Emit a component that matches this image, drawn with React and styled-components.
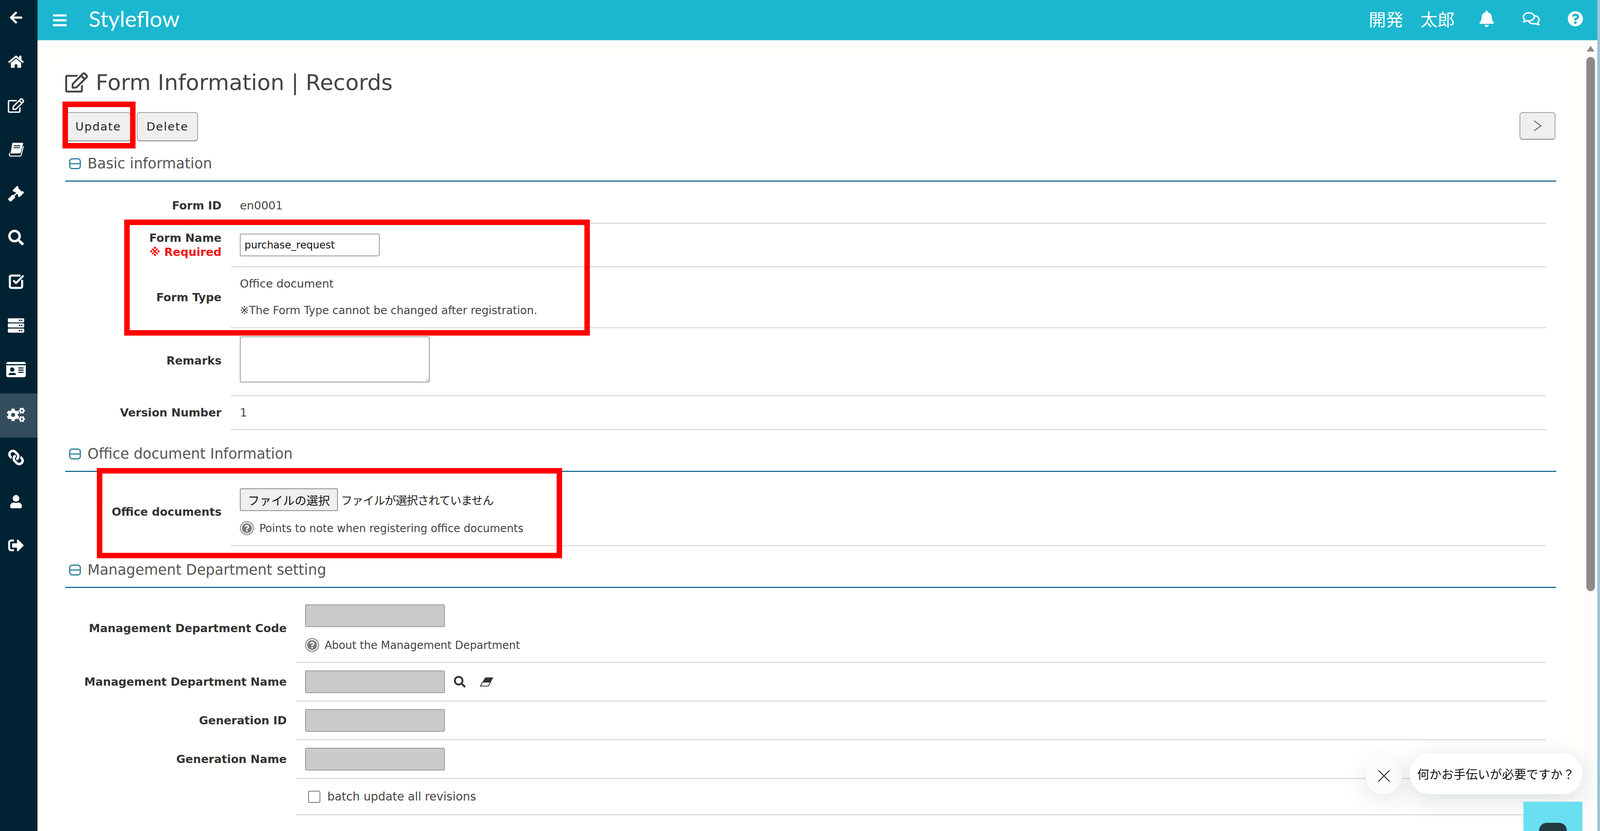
import React from "react";
import styled, { createGlobalStyle } from "styled-components";
import { SquareCheckBig } from "lucide-react";
import {
  FaArrowLeft,
  FaBars,
  FaBell,
  FaCogs,
  FaGavel,
  FaHome,
  FaIdCard,
  FaLink,
  FaQuestionCircle,
  FaRegComments,
  FaRegEdit,
  FaSearch,
  FaServer,
  FaSignOutAlt,
  FaUser,
} from "react-icons/fa";

const GlobalStyle = createGlobalStyle`
  html, body {
    margin: 0;
    padding: 0;
    overflow: hidden;
  }
  * {
    box-sizing: border-box;
  }
`;

const Shell = styled.div`
  position: relative;
  display: flex;
  width: 100vw;
  height: 100vh;
  overflow: hidden;
  background-color: #9fc3da;
  font-family: "DejaVu Sans", "Noto Sans CJK JP", sans-serif;
  color: #444;
`;

const Sidebar = styled.nav`
  width: 96px;
  flex-shrink: 0;
  background-color: #002233;
  display: flex;
  flex-direction: column;
`;

const NavList = styled.div`
  display: flex;
  flex-direction: column;
  margin-top: -6px;
`;

const NavItem = styled.a`
  height: 112.6px;
  display: flex;
  align-items: center;
  justify-content: center;
  padding-right: 14px;
  padding-bottom: ${({ $active }) => ($active ? "4px" : "10px")};
  color: #fff;
  background-color: ${({ $active }) => ($active ? "#334d5c" : "transparent")};
`;

const FlippedLink = styled(FaLink)`
  transform: scaleX(-1);
`;

const Main = styled.div`
  flex: 1;
  min-width: 0;
  margin-right: 7px;
  display: flex;
  flex-direction: column;
`;

const Header = styled.header`
  height: 103px;
  flex-shrink: 0;
  display: flex;
  align-items: center;
  padding: 0 36px 0 37px;
  background-color: #1bb7cf;
  color: #fff;
`;

const Logo = styled.div`
  margin-left: 54px;
  margin-top: -8px;
  font-family: "Lato", sans-serif;
  font-size: 57px;
  line-height: 1;
`;

const UserName = styled.div`
  margin-left: auto;
  margin-top: -8px;
  font-family: "Noto Sans CJK JP", sans-serif;
  font-size: 44px;
  line-height: 1;
`;

const HeaderIcons = styled.div`
  display: flex;
  align-items: center;
  gap: 71px;
  margin-left: 61px;
  margin-top: -8px;
`;

const Body = styled.div`
  flex: 1;
  display: flex;
  min-height: 0;
`;

const Page = styled.main`
  flex: 1;
  min-width: 0;
  padding: 45px 49px 0 47px;
  background-color: #fffffb;
`;

const Sheet = styled.div`
  height: 100%;
  padding: 0 21px 0 24px;
  background-color: #fff;
`;

const ScrollRail = styled.div`
  width: 35px;
  display: flex;
  flex-direction: column;
  align-items: center;
  padding-top: 14px;
  background-color: #fcfcfc;
`;

const ScrollArrow = styled.div`
  width: 0;
  height: 0;
  border-left: 10px solid transparent;
  border-right: 10px solid transparent;
  border-bottom: 15px solid #8a8a8a;
`;

const ScrollThumb = styled.div`
  width: 22px;
  height: 1367px;
  margin-top: 14px;
  border-radius: 11px;
  background-color: #8a8a8a;
`;

const Title = styled.h1`
  height: 126px;
  margin: 0;
  display: flex;
  align-items: center;
  gap: 20px;
  font-size: 56px;
  font-weight: 400;
  line-height: 1;
  color: #444;
`;

const Toolbar = styled.div`
  display: flex;
  align-items: flex-start;
  gap: 15px;
  margin: 13px 2px -4px 1px;
`;

const Button = styled.button`
  height: 75px;
  padding: 0 23px;
  border: 2px solid #a0a0a0;
  border-bottom-width: 3px;
  border-radius: 8px;
  background-color: #efefef;
  font-family: inherit;
  font-size: 29px;
  letter-spacing: 2px;
  color: #222;
`;

const PagerButton = styled(Button)`
  width: 92px;
  height: 71px;
  margin-left: auto;
  padding: 0;
  display: flex;
  align-items: center;
  justify-content: center;
  color: #666;
`;

const Section = styled.section`
  margin-top: 18px;
`;

const SectionHead = styled.h2`
  height: 89px;
  margin: 0;
  padding-left: 10px;
  display: flex;
  align-items: center;
  gap: 17px;
  border-bottom: 3px solid #1d6d91;
  font-size: 36.5px;
  font-weight: 400;
  line-height: 1;
  color: #555;

  svg {
    color: #2a7fa0;
  }
`;

const Row = styled.div`
  display: grid;
  grid-template-columns: ${({ $label }) => $label || 400}px 1fr;
  height: ${({ $h }) => $h}px;
  color: #444;
`;

const Label = styled.div`
  display: flex;
  flex-direction: column;
  align-items: flex-end;
  justify-content: center;
  padding-top: ${({ $top }) => $top || 0}px;
  padding-bottom: ${({ $bottom }) => $bottom || 0}px;
  border-bottom: 3px solid transparent;
  font-size: 28.7px;
  font-weight: 700;
  line-height: 36px;
  color: #333;
`;

const Required = styled.span`
  color: #f01414;
`;

const Value = styled.div`
  margin: 0 26px 0 24px;
  padding-left: 23px;
  padding-top: ${({ $top }) => $top || 0}px;
  padding-bottom: ${({ $bottom }) => $bottom || 0}px;
  display: flex;
  flex-direction: column;
  align-items: flex-start;
  justify-content: center;
  gap: ${({ $gap }) => $gap || 0}px;
  border-bottom: 3px solid #dddddd;
  font-size: 29px;
  line-height: 34px;
`;

const Note = styled.div`
  font-size: 28px;
  line-height: 34px;
  color: #444;
`;

const TextInput = styled.input`
  width: 358px;
  height: 58px;
  padding: 0 10px;
  border: 2px solid #999;
  border-radius: 4px;
  background-color: ${({ disabled }) => (disabled ? "#cacaca" : "#fff")};
  font-family: inherit;
  font-size: 26px;
  color: #111;
`;

const RemarksBox = styled.textarea`
  width: 486px;
  height: 118px;
  margin-bottom: 6px;
  border: 2px solid #999;
  border-radius: 4px;
  background-color: #fff;
`;

const FileRow = styled.div`
  display: flex;
  align-items: center;
  gap: 8px;
  font-family: "Noto Sans CJK JP", sans-serif;
  font-size: 29px;
  letter-spacing: -1px;
  color: #222;
`;

const FileButton = styled.button`
  width: 251px;
  height: 58px;
  padding: 0;
  border: 2px solid #8a8a8a;
  border-radius: 4px;
  background-color: #efefef;
  font-family: inherit;
  font-size: 30px;
  color: #111;
`;

const HelpLine = styled.div`
  display: flex;
  align-items: center;
  gap: 14px;
  font-size: 27.5px;
  color: #444;
`;

const HelpBadge = styled.span`
  width: 36px;
  height: 36px;
  display: flex;
  align-items: center;
  justify-content: center;
  border: 3px solid #9a9a9a;
  border-radius: 50%;
  color: #777;
`;

const InputRow = styled.div`
  display: flex;
  align-items: center;
  gap: 23px;
  color: #333;
`;

const EraserIcon = styled.svg`
  margin-left: 13px;
  color: #333;
`;

const CheckLine = styled.label`
  display: flex;
  align-items: center;
  gap: 18px;
  margin-left: 8px;
  font-size: 29.5px;
  color: #444;
`;

const CheckBox = styled.input`
  appearance: none;
  width: 31px;
  height: 31px;
  margin: 0;
  border: 2px solid #777;
  border-radius: 4px;
  background-color: #fff;
`;

const Highlight = styled.div`
  position: absolute;
  left: ${({ $x }) => $x}px;
  top: ${({ $y }) => $y}px;
  width: ${({ $w }) => $w}px;
  height: ${({ $h }) => $h}px;
  border: 14px solid #ff0000;
  pointer-events: none;
`;

const ChatPrompt = styled.div`
  position: absolute;
  right: 46px;
  bottom: 94px;
  display: flex;
  align-items: flex-end;
  gap: 20px;
`;

const ChatClose = styled.div`
  width: 93px;
  height: 95px;
  display: flex;
  align-items: center;
  justify-content: center;
  border-radius: 50%;
  background-color: #fbfbfb;
  box-shadow: 0 14px 60px rgba(20, 50, 60, 0.12);
  color: #111;
`;

const ChatBubble = styled.div`
  width: 441px;
  height: 104px;
  display: flex;
  align-items: center;
  justify-content: center;
  padding-bottom: 4px;
  border-radius: 50px;
  background-color: #fff;
  box-shadow: 0 14px 60px rgba(20, 50, 60, 0.16);
  font-family: "Noto Sans CJK JP", sans-serif;
  font-size: 31px;
  color: #111;
`;

const ChatLauncher = styled.div`
  position: absolute;
  right: 45px;
  bottom: 0;
  width: 151px;
  height: 75px;
  display: flex;
  justify-content: center;
  padding-top: 54px;
  background-color: #69e0f1;
`;

const ChatLauncherGlyph = styled.div`
  width: 71px;
  height: 21px;
  border-radius: 20px 20px 0 0;
  background-color: #243b40;
`;

const BookIcon = ({ size }) => (
  <svg width={size} height={size} viewBox="0 0 41 38" fill="none">
    <path d="M11 1H37Q40 1 39 4L33 27Q32.5 29 30 29H6Z" fill="currentColor" />
    <path d="M4 28Q1 36 8 36H31Q33 36 34 34L40 10" stroke="currentColor" strokeWidth="2.5" />
    <path d="M15 9H32M14 14H31" stroke="#002233" strokeWidth="2.5" />
  </svg>
);

const CheckIcon = ({ size }) => <SquareCheckBig size={size} strokeWidth={3} />;

const MinusBox = () => (
  <svg width="30" height="28" viewBox="0 0 30 28" fill="none">
    <rect x="1.5" y="1.5" width="27" height="25" rx="6" stroke="currentColor" strokeWidth="3" />
    <path d="M2 14H28" stroke="currentColor" strokeWidth="3" />
  </svg>
);

const navItems = [
  { icon: FaArrowLeft, size: 36 },
  { icon: FaHome, size: 40 },
  { icon: FaRegEdit, size: 42 },
  { icon: BookIcon, size: 40 },
  { icon: FaGavel, size: 40 },
  { icon: FaSearch, size: 40 },
  { icon: CheckIcon, size: 42 },
  { icon: FaServer, size: 42 },
  { icon: FaIdCard, size: 50 },
  { icon: FaCogs, size: 46, active: true },
  { icon: FlippedLink, size: 40 },
  { icon: FaUser, size: 34 },
  { icon: FaSignOutAlt, size: 40 },
];

const HelpNote = ({ children }) => (
  <HelpLine>
    <HelpBadge>
      <FaQuestionCircle size={26} />
    </HelpBadge>
    {children}
  </HelpLine>
);

const SectionTitle = ({ children }) => (
  <SectionHead>
    <MinusBox />
    {children}
  </SectionHead>
);

const App = () => {
  return (
    <Shell>
      <GlobalStyle />
      <Sidebar>
        <NavList>
          {navItems.map(({ icon: Icon, size, active }, index) => (
            <NavItem key={index} $active={active}>
              <Icon size={size} />
            </NavItem>
          ))}
        </NavList>
      </Sidebar>

      <Main>
        <Header>
          <FaBars size={40} />
          <Logo>Styleflow</Logo>
          <UserName>開発　太郎</UserName>
          <HeaderIcons>
            <FaBell size={42} />
            <FaRegComments size={44} />
            <FaQuestionCircle size={40} />
          </HeaderIcons>
        </Header>

        <Body>
          <Page>
            <Sheet>
              <Title>
                <FaRegEdit size={58} />
                Form Information | Records
              </Title>
              <Toolbar>
                <Button>Update</Button>
                <Button>Delete</Button>
                <PagerButton>
                  <svg width="22" height="30" viewBox="0 0 22 30" fill="none">
                    <path d="M2 2L20 15L2 28" stroke="currentColor" strokeWidth="2.5" />
                  </svg>
                </PagerButton>
              </Toolbar>

              <Section>
                <SectionTitle>Basic information</SectionTitle>
                <Row $h={108}>
                  <Label $top={17}>Form ID</Label>
                  <Value $top={17}>en0001</Value>
                </Row>
                <Row $h={111}>
                  <Label>
                    Form Name
                    <Required>※ Required</Required>
                  </Label>
                  <Value>
                    <TextInput defaultValue="purchase_request" />
                  </Value>
                </Row>
                <Row $h={156}>
                  <Label>Form Type</Label>
                  <Value $gap={35}>
                    Office document
                    <Note>※The Form Type cannot be changed after registration.</Note>
                  </Value>
                </Row>
                <Row $h={174}>
                  <Label $bottom={6}>Remarks</Label>
                  <Value $bottom={6}>
                    <RemarksBox />
                  </Value>
                </Row>
                <Row $h={87}>
                  <Label>Version Number</Label>
                  <Value>1</Value>
                </Row>
              </Section>

              <Section>
                <SectionTitle>Office document Information</SectionTitle>
                <Row $h={190}>
                  <Label $top={16}>Office documents</Label>
                  <Value $top={16} $gap={26}>
                    <FileRow>
                      <FileButton>ファイルの選択</FileButton>
                      ファイルが選択されていません
                    </FileRow>
                    <HelpNote>Points to note when registering office documents</HelpNote>
                  </Value>
                </Row>
              </Section>

              <Section>
                <SectionTitle>Management Department setting</SectionTitle>
                <Row $label={567} $h={192}>
                  <Label $top={17}>Management Department Code</Label>
                  <Value $top={17} $gap={28}>
                    <TextInput disabled />
                    <HelpNote>About the Management Department</HelpNote>
                  </Value>
                </Row>
                <Row $label={567} $h={99}>
                  <Label>Management Department Name</Label>
                  <Value>
                    <InputRow>
                      <TextInput disabled />
                      <FaSearch size={30} />
                      <EraserIcon width="36" height="24" viewBox="0 0 36 24" fill="none">
                        <path d="M14 1H35L28 13H7Z" fill="currentColor" />
                        <path d="M7 13H28L22 23H2Z" stroke="currentColor" strokeWidth="2" />
                      </EraserIcon>
                    </InputRow>
                  </Value>
                </Row>
                <Row $label={567} $h={99}>
                  <Label>Generation ID</Label>
                  <Value>
                    <TextInput disabled />
                  </Value>
                </Row>
                <Row $label={567} $h={99}>
                  <Label>Generation Name</Label>
                  <Value>
                    <TextInput disabled />
                  </Value>
                </Row>
                <Row $label={567} $h={93}>
                  <Label />
                  <Value>
                    <CheckLine>
                      <CheckBox type="checkbox" />
                      batch update all revisions
                    </CheckLine>
                  </Value>
                </Row>
              </Section>
            </Sheet>
          </Page>
          <ScrollRail>
            <ScrollArrow />
            <ScrollThumb />
          </ScrollRail>
        </Body>
      </Main>

      <Highlight $x={160} $y={260} $w={187} $h={120} />
      <Highlight $x={318} $y={562} $w={1192} $h={297} />
      <Highlight $x={248} $y={1198} $w={1191} $h={231} />

      <ChatPrompt>
        <ChatClose>
          <svg width="30" height="30" viewBox="0 0 30 30">
            <path d="M1 1L29 29M29 1L1 29" stroke="currentColor" strokeWidth="2" fill="none" />
          </svg>
        </ChatClose>
        <ChatBubble>何かお手伝いが必要ですか？</ChatBubble>
      </ChatPrompt>
      <ChatLauncher>
        <ChatLauncherGlyph />
      </ChatLauncher>
    </Shell>
  );
};

export default App;
